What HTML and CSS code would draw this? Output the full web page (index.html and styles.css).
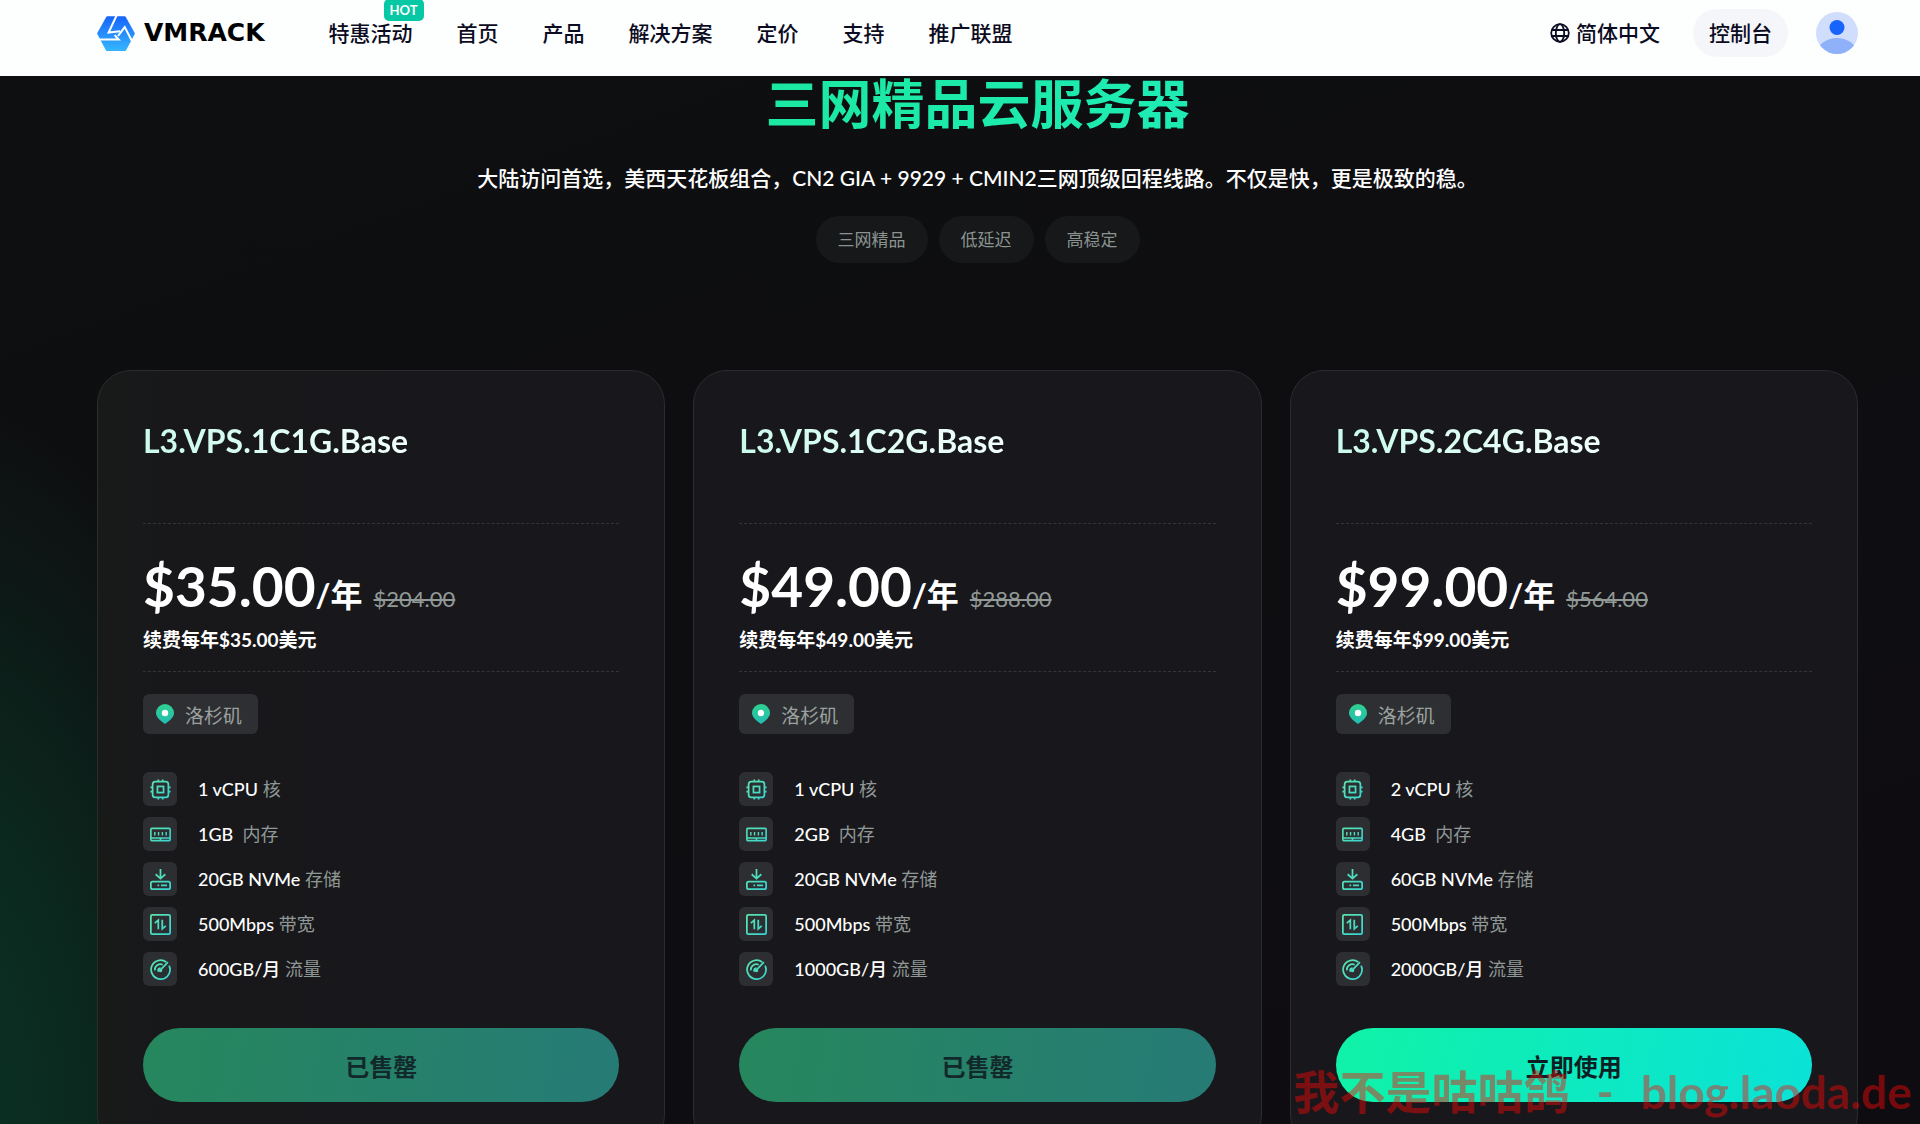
FILE: index.html
```html
<!DOCTYPE html>
<html lang="zh-CN">
<head>
<meta charset="utf-8">
<meta name="viewport" content="width=device-width, initial-scale=1">
<title>VMRACK 三网精品云服务器</title>
<link rel="stylesheet" href="styles.css">
</head>
<body>
<svg class="sprite" aria-hidden="true">
  <defs>
    <linearGradient id="mint" x1="0" y1="0" x2="24" y2="24" gradientUnits="userSpaceOnUse">
      <stop offset="0" stop-color="#5fe6a8"/><stop offset="1" stop-color="#35d3d6"/>
    </linearGradient>
    <linearGradient id="pin" x1="0" y1="0" x2="0" y2="1">
      <stop offset="0" stop-color="#2fd08f"/><stop offset="1" stop-color="#22bdb4"/>
    </linearGradient>
    <linearGradient id="brand" x1="0" y1="0" x2="0" y2="1">
      <stop offset="0" stop-color="#1766fb"/><stop offset="1" stop-color="#35b4fd"/>
    </linearGradient>
  </defs>
  <symbol id="i-cpu" viewBox="0 0 24 24">
    <g fill="none" stroke="url(#mint)" stroke-width="2">
      <rect x="3" y="3" width="18" height="18" rx="3"/><rect x="8.500" y="8.500" width="7" height="7"/>
      <path d="M9.500 3V0.500M14.500 3V0.500M9.500 21v2.500M14.500 21v2.500M3 9.500H0.500M3 14.500H0.500M21 9.500h2.500M21 14.500h2.500"/>
    </g>
  </symbol>
  <symbol id="i-ram" viewBox="0 0 24 24">
    <g fill="none" stroke="url(#mint)" stroke-width="1.800">
      <rect x="1" y="5" width="22" height="14" rx="1"/><path d="M1 16h22M12 16v3"/>
      <path stroke-width="1.600" d="M5.500 9v4M9.800 9v4M14.200 9v4M18.500 9v4"/>
    </g>
  </symbol>
  <symbol id="i-disk" viewBox="0 0 24 24">
    <g fill="none" stroke="url(#mint)" stroke-width="2">
      <path d="M12 0v10.500M6.500 6L12 11l5.500-5"/><rect x="1" y="14.500" width="22" height="8.500" rx="2"/>
      <path d="M8.500 18.800h2M12.500 18.800h7"/>
    </g>
  </symbol>
  <symbol id="i-net" viewBox="0 0 24 24">
    <g fill="none" stroke="url(#mint)" stroke-width="2">
      <rect x="1" y="1" width="22" height="22" rx="1.500"/><path d="M5.500 10.500L9.500 7v10.500M14 6.500V17l4-3.500"/>
    </g>
  </symbol>
  <symbol id="i-gauge" viewBox="0 0 24 24">
    <g fill="none" stroke="url(#mint)" stroke-width="2">
      <path d="M18.500 3.500A10.800 10.800 0 1 0 21.800 7.500M20.500 3.500L12 12.500"/><path d="M5.500 13A6.500 6.500 0 0 1 14.500 6.500"/>
      <path d="M9.800 14.500a2.600 2.600 0 0 1 2.200-4.200"/>
    </g>
    <circle cx="12" cy="13" r="2" fill="url(#mint)"/>
  </symbol>
  <symbol id="i-pin" viewBox="0 0 18 20">
    <path fill="url(#pin)" d="M9 0a9 9 0 0 1 9 9c0 4-4.500 8-9 11C4.500 17 0 13 0 9a9 9 0 0 1 9-9z"/><circle cx="9" cy="9" r="3.200" fill="#fff"/>
  </symbol>
</svg>

<header class="topbar">
  <a class="brand" href="#">
    <svg class="brand-mark" viewBox="16 17 112 104" aria-hidden="true">
      <path fill="url(#brand)" stroke="url(#brand)" stroke-width="6" stroke-linejoin="round" d="M46 21H98L125 69L99 118H45L19 69z"/>
      <g fill="none" stroke="#fff" stroke-width="6">
        <path d="M74 15L50 66L84 62"/>
        <path d="M124 100L98 50L78 76"/>
        <path d="M20 87H80L68 74"/>
      </g>
    </svg>
    <span class="brand-name">VMRACK</span>
  </a>
  <nav class="menu">
    <a href="#">特惠活动<span class="hot">HOT</span></a>
    <a href="#">首页</a>
    <a href="#">产品</a>
    <a href="#">解决方案</a>
    <a href="#">定价</a>
    <a href="#">支持</a>
    <a href="#">推广联盟</a>
  </nav>
  <div class="tools">
    <button class="lang" type="button">
      <svg class="globe" viewBox="0 0 20 20" fill="none" stroke="currentColor" stroke-width="1.800" aria-hidden="true">
        <circle cx="10" cy="10" r="8.800"/><ellipse cx="10" cy="10" rx="4.200" ry="8.800"/><path d="M2 7h16M2 13h16"/>
      </svg>
      简体中文
    </button>
    <button class="console" type="button">控制台</button>
    <a class="avatar" href="#" aria-label="账户">
      <svg viewBox="0 0 42 42" aria-hidden="true">
        <defs><clipPath id="disc"><circle cx="21" cy="21" r="21"/></clipPath></defs>
        <g clip-path="url(#disc)"><rect width="42" height="42" fill="#d0ddfd"/><ellipse cx="21" cy="41" rx="20" ry="15" fill="#8eb1fa"/></g>
        <circle cx="21" cy="15.500" r="7.500" fill="#1763fb"/>
      </svg>
    </a>
  </div>
</header>

<main class="page">
  <section class="hero">
    <h1>三网精品云服务器</h1>
    <p class="lead">大陆访问首选，美西天花板组合，CN2 GIA + 9929 + CMIN2三网顶级回程线路。不仅是快，更是极致的稳。</p>
    <ul class="tags"><li>三网精品</li><li>低延迟</li><li>高稳定</li></ul>
  </section>

  <section class="plans">
    <article class="plan">
      <h2>L3.VPS.1C1G.Base</h2>
      <div class="pricing">
        <p class="price"><strong>$35.00</strong><span class="per">/年</span><s>$204.00</s></p>
        <p class="renew">续费每年$35.00美元</p>
      </div>
      <p class="place"><svg viewBox="0 0 18 20" aria-hidden="true"><use href="#i-pin"/></svg>洛杉矶</p>
      <ul class="specs">
        <li><span class="tile"><svg aria-hidden="true"><use href="#i-cpu"/></svg></span><span><b>1 vCPU</b> 核</span></li>
        <li><span class="tile"><svg aria-hidden="true"><use href="#i-ram"/></svg></span><span><b>1GB</b>&nbsp; 内存</span></li>
        <li><span class="tile"><svg aria-hidden="true"><use href="#i-disk"/></svg></span><span><b>20GB NVMe</b> 存储</span></li>
        <li><span class="tile"><svg aria-hidden="true"><use href="#i-net"/></svg></span><span><b>500Mbps</b> 带宽</span></li>
        <li><span class="tile"><svg aria-hidden="true"><use href="#i-gauge"/></svg></span><span><b>600GB/月</b> 流量</span></li>
      </ul>
      <button class="buy" type="button" disabled>已售罄</button>
    </article>

    <article class="plan">
      <h2>L3.VPS.1C2G.Base</h2>
      <div class="pricing">
        <p class="price"><strong>$49.00</strong><span class="per">/年</span><s>$288.00</s></p>
        <p class="renew">续费每年$49.00美元</p>
      </div>
      <p class="place"><svg viewBox="0 0 18 20" aria-hidden="true"><use href="#i-pin"/></svg>洛杉矶</p>
      <ul class="specs">
        <li><span class="tile"><svg aria-hidden="true"><use href="#i-cpu"/></svg></span><span><b>1 vCPU</b> 核</span></li>
        <li><span class="tile"><svg aria-hidden="true"><use href="#i-ram"/></svg></span><span><b>2GB</b>&nbsp; 内存</span></li>
        <li><span class="tile"><svg aria-hidden="true"><use href="#i-disk"/></svg></span><span><b>20GB NVMe</b> 存储</span></li>
        <li><span class="tile"><svg aria-hidden="true"><use href="#i-net"/></svg></span><span><b>500Mbps</b> 带宽</span></li>
        <li><span class="tile"><svg aria-hidden="true"><use href="#i-gauge"/></svg></span><span><b>1000GB/月</b> 流量</span></li>
      </ul>
      <button class="buy" type="button" disabled>已售罄</button>
    </article>

    <article class="plan">
      <h2>L3.VPS.2C4G.Base</h2>
      <div class="pricing">
        <p class="price"><strong>$99.00</strong><span class="per">/年</span><s>$564.00</s></p>
        <p class="renew">续费每年$99.00美元</p>
      </div>
      <p class="place"><svg viewBox="0 0 18 20" aria-hidden="true"><use href="#i-pin"/></svg>洛杉矶</p>
      <ul class="specs">
        <li><span class="tile"><svg aria-hidden="true"><use href="#i-cpu"/></svg></span><span><b>2 vCPU</b> 核</span></li>
        <li><span class="tile"><svg aria-hidden="true"><use href="#i-ram"/></svg></span><span><b>4GB</b>&nbsp; 内存</span></li>
        <li><span class="tile"><svg aria-hidden="true"><use href="#i-disk"/></svg></span><span><b>60GB NVMe</b> 存储</span></li>
        <li><span class="tile"><svg aria-hidden="true"><use href="#i-net"/></svg></span><span><b>500Mbps</b> 带宽</span></li>
        <li><span class="tile"><svg aria-hidden="true"><use href="#i-gauge"/></svg></span><span><b>2000GB/月</b> 流量</span></li>
      </ul>
      <button class="buy" type="button">立即使用</button>
    </article>
  </section>
</main>

<div class="watermark"><span>我不是咕咕鸽</span><span>-</span><span>blog.laoda.de</span></div>
</body>
</html>
```
FILE: styles.css
```css
* { box-sizing: border-box; margin: 0; padding: 0; }

body {
  display: flex;
  flex-direction: column;
  height: 100vh;
  background: #0e0f11;
  color: #fff;
  font-family: Lato, "Noto Sans CJK SC", sans-serif;
  font-size: 19px;
}

a { color: inherit; text-decoration: none; }
ul { list-style: none; }
button { border: 0; background: none; color: inherit; font: inherit; cursor: pointer; }
svg { display: block; }
.sprite { position: absolute; width: 0; height: 0; }

/* Top bar */
.topbar {
  flex: none;
  display: flex;
  align-items: center;
  height: 76px;
  padding: 0 62px 10px 97px;
  background: #fdfefe;
  color: #0b0b22;
  font-size: 21px;
  font-weight: 500;
  line-height: 32px;
}
.brand { display: flex; align-items: center; gap: 9px; margin-right: 64px; color: #000; }
.brand-mark { width: 38px; height: 35px; }
.brand-name { font-family: "DejaVu Sans", sans-serif; font-size: 25px; font-weight: 700; }
.menu { display: flex; gap: 44px; white-space: nowrap; }
.menu a { position: relative; }
.hot {
  position: absolute;
  right: -11px;
  top: -18px;
  padding: 0 6px;
  border-radius: 5px;
  background: #07c8a5;
  color: #fff;
  font-size: 13px;
  font-weight: 700;
  line-height: 22px;
}
.tools { display: flex; align-items: center; margin-left: auto; white-space: nowrap; }
.lang { display: flex; align-items: center; gap: 6px; margin-right: 33px; }
.globe { width: 20px; height: 20px; }
.console { height: 48px; margin-right: 28px; padding: 0 16px; border-radius: 24px; background: #f5f6fa; }
.avatar svg { width: 42px; height: 42px; }

/* Page body */
.page {
  flex: 1;
  overflow-y: auto;
  scrollbar-width: none;
  padding: 0 62px 60px 97px;
  background:
    radial-gradient(ellipse 340px 720px at -60px 100%, #0c3325 0%, #0b281e 45%, transparent 100%),
    linear-gradient(160deg, #0e0f10, #0e0e11 50%, #0f0c11);
}

.hero { display: flex; flex-direction: column; align-items: center; text-align: center; }
.hero h1 {
  background: linear-gradient(100deg, #1be8a0, #1eecb4);
  background-clip: text;
  color: transparent;
  font-size: 53px;
  font-weight: 700;
  line-height: 56px;
}
.lead { margin-top: 30px; font-size: 21px; font-weight: 500; line-height: 32px; }
.tags { display: flex; gap: 11px; margin-top: 22px; }
.tags li { padding: 0 22px; border-radius: 24px; background: #161819; color: #8b9391; font-size: 17px; line-height: 47px; }

/* Plan cards */
.plans { display: grid; grid-template-columns: repeat(3, 1fr); gap: 28px; margin-top: 107px; }
.plan {
  padding: 46px 45px;
  border: 1px solid #2a2c2e;
  border-radius: 34px;
  background: #18171b;
}
.plan:first-child { background: linear-gradient(90deg, #181a18, #18181b 12%, #18171b); }
.plan h2 {
  width: fit-content;
  background: linear-gradient(90deg, #c9fbea, #f2fffb);
  background-clip: text;
  color: transparent;
  font-size: 32px;
  font-weight: 700;
  line-height: 48px;
}
.pricing {
  margin-top: 58px;
  padding: 30px 0 17px;
  border-top: 1px dashed #333638;
  border-bottom: 1px dashed #333638;
}
.price { display: flex; align-items: baseline; line-height: 64px; }
.price strong { font-size: 55px; font-weight: 700; }
.per { font-size: 32px; font-weight: 700; line-height: 32px; }
.price s { margin-left: 11px; color: #919a97; font-size: 22px; line-height: 32px; text-decoration-thickness: 2px; }
.renew { margin-top: 8px; font-weight: 700; line-height: 28px; }
.place {
  display: flex;
  align-items: center;
  gap: 11px;
  width: fit-content;
  height: 40px;
  margin-top: 22px;
  padding: 0 16px 0 13px;
  border-radius: 6px;
  background: #2e2f32;
  color: #9aa19f;
}
.place svg { width: 18px; height: 20px; }
.specs { display: grid; gap: 11px; margin-top: 38px; color: #8f9896; font-size: 18px; }
.specs li { display: flex; align-items: center; gap: 21px; line-height: 34px; }
.specs b { color: #fff; font-weight: 500; }
.tile { display: grid; place-items: center; width: 34px; height: 34px; border-radius: 6px; background: #2d2e31; }
.tile svg { width: 21px; height: 21px; }
.buy {
  width: 100%;
  height: 74px;
  margin-top: 42px;
  border-radius: 37px;
  background: linear-gradient(100deg, #10f2a6, #0be2d8);
  color: #0c1f24;
  font-size: 24px;
  font-weight: 700;
}
.buy:disabled { background: linear-gradient(100deg, #26875d, #267b76); color: #12292b; }

.watermark {
  position: fixed;
  right: 8px;
  bottom: 4px;
  display: flex;
  gap: 27px;
  color: rgba(255, 8, 8, 0.43);
  font-size: 46px;
  font-weight: 700;
  line-height: 56px;
  white-space: nowrap;
  pointer-events: none;
}
```
